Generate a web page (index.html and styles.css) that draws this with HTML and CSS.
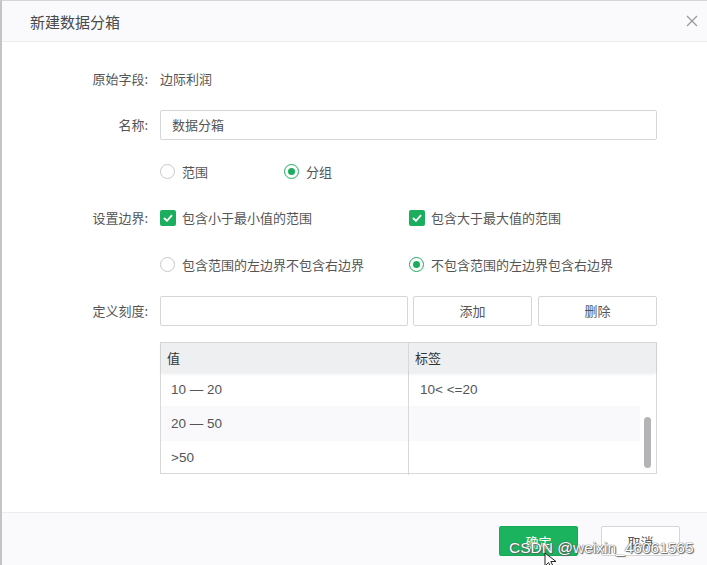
FILE: index.html
```html
<!DOCTYPE html>
<html lang="zh-CN">
<head>
<meta charset="utf-8">
<title>新建数据分箱</title>
<link rel="stylesheet" href="styles.css">
</head>
<body>
<div class="dialog">
  <div class="header">
    <span class="title">新建数据分箱</span>
    <svg class="close" width="12" height="12" viewBox="0 0 12 12"><path d="M1 1L11 11M11 1L1 11" stroke="#9a9a9a" stroke-width="1.3" fill="none"/></svg>
  </div>
  <div class="body">
    <div class="form">
      <div class="label">原始字段:</div>
      <div class="ctrl"><span class="text">边际利润</span></div>

      <div class="label">名称:</div>
      <div class="ctrl"><div class="input">数据分箱</div></div>

      <div class="label"></div>
      <div class="ctrl">
        <span class="opt opt-range"><span class="radio"></span>范围</span>
        <span class="opt"><span class="radio on"></span>分组</span>
      </div>

      <div class="label">设置边界:</div>
      <div class="ctrl two">
        <span class="opt"><span class="check"><svg width="10" height="8" viewBox="0 0 10 8"><path d="M1 4L4 6.8L9 1.2" stroke="#fff" stroke-width="1.8" fill="none"/></svg></span>包含小于最小值的范围</span>
        <span class="opt"><span class="check"><svg width="10" height="8" viewBox="0 0 10 8"><path d="M1 4L4 6.8L9 1.2" stroke="#fff" stroke-width="1.8" fill="none"/></svg></span>包含大于最大值的范围</span>
      </div>

      <div class="label"></div>
      <div class="ctrl two">
        <span class="opt"><span class="radio"></span>包含范围的左边界不包含右边界</span>
        <span class="opt"><span class="radio on"></span>不包含范围的左边界包含右边界</span>
      </div>

      <div class="label">定义刻度:</div>
      <div class="ctrl scale">
        <div class="input"></div>
        <div class="btn">添加</div>
        <div class="btn">删除</div>
      </div>

      <div class="label"></div>
      <div class="ctrl tablewrap">
        <div class="table">
          <div class="thead">
            <div class="th c1">值</div>
            <div class="th c2">标签</div>
          </div>
          <div class="tbody">
            <div class="tr"><div class="td c1">10 — 20</div><div class="td c2">10&lt; &lt;=20</div></div>
            <div class="tr alt"><div class="td c1">20 — 50</div><div class="td c2"></div></div>
            <div class="tr"><div class="td c1">&gt;50</div><div class="td c2"></div></div>
            <div class="thumb"></div>
          </div>
        </div>
      </div>
    </div>
  </div>
  <div class="footer">
    <div class="fbtn ok">确定</div>
    <div class="fbtn cancel">取消</div>
  </div>
  <div class="watermark">CSDN @weixin_46061565</div>
  <svg class="cursor" width="14" height="16" viewBox="0 0 14 16"><path d="M1 1L1 14L4.5 10.5L7.5 16L9.5 15L6.8 9.5L12 9.5Z" fill="#fff" stroke="#222" stroke-width="1"/></svg>
</div>
</body>
</html>
```

FILE: styles.css
```css
* { box-sizing: border-box; }
html, body { margin: 0; padding: 0; }
body {
  width: 707px;
  height: 565px;
  overflow: hidden;
  background: #ffffff;
  font-family: "Noto Sans CJK SC", "Liberation Sans", sans-serif;
  color: #555;
}
.dialog {
  position: relative;
  width: 707px;
  height: 565px;
  border-left: 2px solid #c4c4c4;
  border-top: 1px solid #d6d6d6;
  display: flex;
  flex-direction: column;
  background: #fff;
}
.header {
  height: 41px;
  flex: none;
  background: #fafafc;
  border-bottom: 1px solid #ececf0;
  display: flex;
  align-items: center;
  justify-content: space-between;
  padding: 0 9px 0 28px;
}
.title {
  font-size: 15px;
  color: #4a4a4a;
}
.close { display: block; }
.body {
  flex: 1;
  padding: 21px 50px 0 0;
}
.form {
  display: grid;
  grid-template-columns: 146px 1fr;
  column-gap: 12px;
  grid-auto-rows: 30px;
  row-gap: 16.5px;
}
.label {
  font-size: 13px;
  color: #555;
  text-align: right;
  display: flex;
  align-items: center;
  justify-content: flex-end;
}
.ctrl {
  display: flex;
  align-items: center;
  font-size: 13px;
  color: #555;
}
.text { color: #555; }
.input {
  width: 100%;
  height: 30px;
  border: 1px solid #d6d6d6;
  border-radius: 2px;
  padding: 0 11px;
  display: flex;
  align-items: center;
  font-size: 13px;
  color: #555;
  background: #fff;
}
.opt {
  display: inline-flex;
  align-items: center;
  white-space: nowrap;
}
.opt-range { width: 124px; }
.two .opt:first-child { width: 249px; }
.radio {
  width: 15px;
  height: 15px;
  border-radius: 50%;
  border: 1px solid #c8c8c8;
  margin-right: 7px;
  background: #fff;
  position: relative;
  flex: none;
}
.radio.on { border-color: #1cae5f; border-width: 1.5px; }
.radio.on::after {
  content: "";
  position: absolute;
  left: 50%;
  top: 50%;
  width: 7px;
  height: 7px;
  margin: -3.5px 0 0 -3.5px;
  border-radius: 50%;
  background: #1cae5f;
}
.check {
  width: 16px;
  height: 16px;
  border-radius: 2px;
  background: #1cae5f;
  margin-right: 6px;
  display: inline-flex;
  align-items: center;
  justify-content: center;
  flex: none;
}
.scale { gap: 5px; }
.scale .input { width: 248px; flex: none; }
.btn {
  width: 119px;
  height: 30px;
  flex: none;
  border: 1px solid #d6d6d6;
  border-radius: 2px;
  display: flex;
  align-items: center;
  justify-content: center;
  font-size: 13px;
  color: #555;
  background: #fff;
}
.scale .btn + .btn { margin-left: 1px; }
.tablewrap { align-items: flex-start; }
.table {
  width: 497px;
  height: 132px;
  border: 1px solid #d8d8d8;
  display: flex;
  flex-direction: column;
  flex: none;
}
.thead {
  height: 29px;
  display: flex;
  background: #eeeff1;
  box-shadow: 0 2px 3px rgba(0,0,0,0.08);
  position: relative;
  z-index: 1;
  flex: none;
}
.th {
  font-size: 13px;
  color: #333;
  display: flex;
  align-items: center;
  padding-left: 6px;
}
.c1 { width: 248px; flex: none; border-right: 1px solid #d8d8d8; }
.c2 { flex: 1; }
.tbody {
  flex: 1;
  position: relative;
  display: flex;
  flex-direction: column;
}
.tr {
  height: 34.3px;
  display: flex;
  margin-right: 16px;
}
.tr.alt { background: #f9f9fb; }
.td {
  font-family: "Liberation Sans", "Noto Sans CJK SC", sans-serif;
  font-size: 13.5px;
  color: #555;
  display: flex;
  align-items: center;
  padding-left: 10px;
}
.tr .c2 { padding-left: 11px; }
.thumb {
  position: absolute;
  right: 5px;
  top: 45px;
  width: 7px;
  height: 51px;
  border-radius: 4px;
  background: #b4b4b6;
}
.footer {
  height: 53px;
  flex: none;
  background: #fafafc;
  border-top: 1px solid #ececf0;
  display: flex;
  justify-content: flex-end;
  align-items: flex-start;
  padding: 13px 27px 0 0;
  gap: 23px;
}
.fbtn {
  width: 79px;
  height: 30px;
  border-radius: 2px;
  display: flex;
  align-items: center;
  justify-content: center;
  font-size: 13px;
}
.ok { background: #1cb35f; color: #fff; border: 1px solid #17a957; }
.cancel { background: #fff; color: #555; border: 1px solid #d6d6d6; }
.watermark {
  position: absolute;
  left: 507px;
  top: 538px;
  font-family: "Liberation Sans", "Noto Sans", sans-serif;
  font-size: 15.5px;
  color: #fff;
  text-shadow: 0 0 1px #555, 0 0 1px #555, 1px 1px 1px #666;
  white-space: nowrap;
}
.cursor {
  position: absolute;
  left: 542px;
  top: 551px;
}
```
